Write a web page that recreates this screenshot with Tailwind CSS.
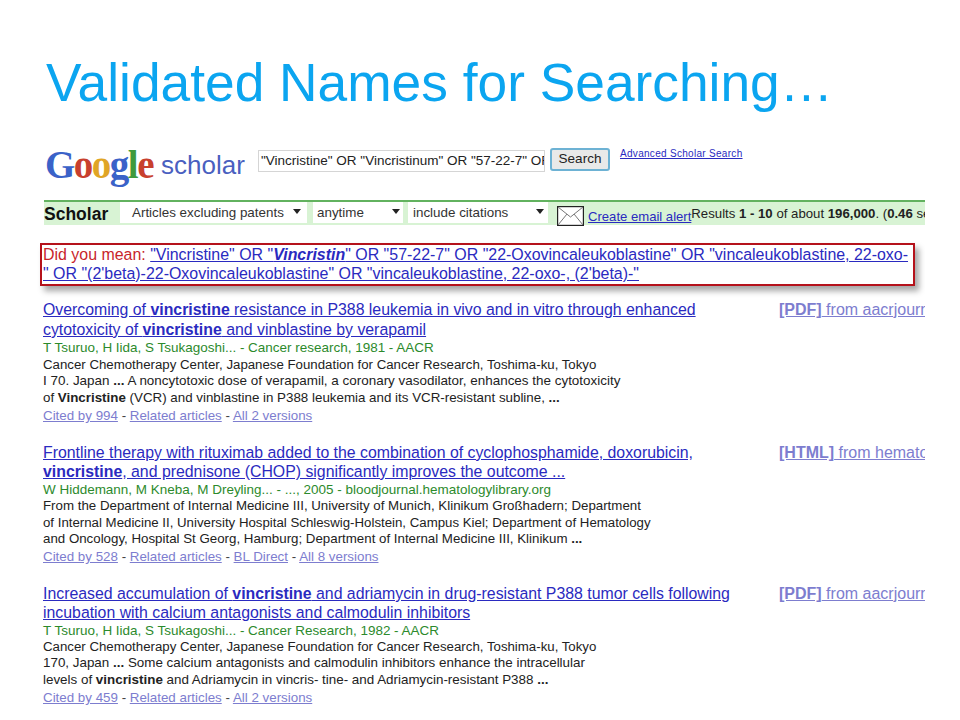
<!DOCTYPE html>
<html lang="en">
<head>
  <meta charset="UTF-8" />
  <title>Validated Names for Searching</title>
  <script src="https://cdn.jsdelivr.net/npm/@tailwindcss/browser@4"></script>
</head>
<body class="bg-white">
  <div class="w-[960px] h-[720px] overflow-hidden font-['Liberation_Sans',sans-serif]">
    <h1 class="pl-[46px] pt-[53px] h-[139px] text-[53.3px] leading-[60px] text-[#0ba5f0] whitespace-nowrap">Validated Names for Searching…</h1>

    <div class="w-[925px] overflow-hidden">
      <!-- search header -->
      <div class="flex h-[61px] pl-[45px]">
        <div class="flex items-start w-[212px] shrink-0 h-[44px]">
          <span class="mt-[6px] font-['Liberation_Serif',serif] font-bold text-[39px] leading-[40px] tracking-[-1.5px]"><span class="text-[#3a62c8]">G</span><span class="text-[#c8402e]">o</span><span class="text-[#e0a526]">o</span><span class="text-[#3a62c8]">g</span><span class="text-[#3f9a3c]">l</span><span class="text-[#c8402e]">e</span></span>
          <span class="ml-[8px] mt-[6px] text-[26px] leading-[40px] text-[#4a5fc0]">scholar</span>
        </div>
        <div class="shrink-0 ml-px mt-[11px] w-[287px] h-[22px] border border-[#d5d5d5] overflow-hidden whitespace-nowrap text-[13.5px] leading-[20px] pl-[2px] text-[#222]">"Vincristine" OR "Vincristinum" OR "57-22-7" OR "22-Oxovincaleukoblastine"</div>
        <div class="shrink-0 ml-[5px] mt-[9px] w-[60px] h-[23px] border-2 border-[#6db2d4] rounded-[3px] bg-[#e9e9e9] text-center text-[13.5px] leading-[18px] text-[#222]">Search</div>
        <a class="ml-[10px] mt-[9px] text-[10px] leading-[12px] text-[#2a2ac0] underline tracking-[0.3px] whitespace-nowrap">Advanced Scholar Search</a>
      </div>

      <!-- green bar -->
      <div class="ml-[44px] h-[25px] flex items-stretch bg-[#d8f3d4] border-t-2 border-[#62b25f] whitespace-nowrap">
        <div class="shrink-0 w-[76px] font-bold text-[17.5px] leading-[25px] text-[#111]">Scholar</div>
        <div class="shrink-0 w-[187px] h-[21px] bg-white flex justify-between pl-[12px] pr-[6px] text-[13.4px] leading-[22px] text-[#333]">Articles excluding patents<svg class="mt-[7px]" width="8" height="5" viewBox="0 0 8 5"><path d="M0 0h8L4 5z" fill="#222"/></svg></div>
        <div class="shrink-0 ml-[6px] w-[90px] h-[21px] bg-white flex justify-between pl-[4px] pr-[3px] text-[13.4px] leading-[22px] text-[#333]">anytime<svg class="mt-[7px]" width="8" height="5" viewBox="0 0 8 5"><path d="M0 0h8L4 5z" fill="#222"/></svg></div>
        <div class="shrink-0 ml-[5px] w-[140px] h-[21px] bg-white flex justify-between pl-[5px] pr-[4px] text-[13.4px] leading-[22px] text-[#333]">include citations<svg class="mt-[7px]" width="8" height="5" viewBox="0 0 8 5"><path d="M0 0h8L4 5z" fill="#222"/></svg></div>
        <svg class="shrink-0 ml-[9px] mt-[4px]" width="27" height="20" viewBox="0 0 27 20" fill="none"><rect x=".6" y=".6" width="25.8" height="18.8" fill="#fff" stroke="#222" stroke-width="1.2"/><path d="M1 1l12.5 10L26 1M1 19l9-11M26 19l-9-11" stroke="#777" stroke-width="1"/></svg>
        <a class="shrink-0 ml-[4px] text-[13.1px] leading-[29px] text-[#2a2ac0] underline">Create email alert</a>
        <div class="shrink-0 text-[13.2px] leading-[23px] text-[#222]">Results <b>1 - 10</b> of about <b>196,000</b>. (<b>0.46</b> seconds)</div>
      </div>

      <!-- did you mean box -->
      <div class="ml-[40px] mt-[18px] w-[875px] h-[43px] border-2 border-[#b5121b] shadow-[4px_5px_6px_rgba(0,0,0,0.35)] pl-[1px] text-[15.95px] leading-[19px] whitespace-nowrap overflow-hidden">
        <div><span class="text-[#c8252b]">Did you mean:</span> <a class="text-[#2a2ac0] underline">"Vincristine" OR "<b><i>Vincristin</i></b>" OR "57-22-7" OR "22-Oxovincaleukoblastine" OR "vincaleukoblastine, 22-oxo-</a></div>
        <div><a class="text-[#2a2ac0] underline">" OR "(2'beta)-22-Oxovincaleukoblastine" OR "vincaleukoblastine, 22-oxo-, (2'beta)-"</a></div>
      </div>

      <!-- results -->
      <div class="ml-[43px] mt-[14px] flex flex-col gap-[17px] whitespace-nowrap">
        <div class="flex">
          <div class="w-[736px] shrink-0">
            <div class="text-[15.85px] leading-[20px] text-[#2a2ac0] underline">Overcoming of <b>vincristine</b> resistance in P388 leukemia in vivo and in vitro through enhanced</div>
            <div class="text-[15.85px] leading-[19px] text-[#2a2ac0] underline">cytotoxicity of <b>vincristine</b> and vinblastine by verapamil</div>
            <div class="text-[13.47px] leading-[17px] text-[#2c8a2c]">T Tsuruo, H Iida, S Tsukagoshi... - Cancer research, 1981 - AACR</div>
            <div class="text-[13.25px] leading-[17px] text-[#222]">Cancer Chemotherapy Center, Japanese Foundation for Cancer Research, Toshima-ku, Tokyo</div>
            <div class="text-[13.45px] leading-[16px] text-[#222]">I 70. Japan <b>...</b> A noncytotoxic dose of verapamil, a coronary vasodilator, enhances the cytotoxicity</div>
            <div class="text-[13.35px] leading-[17px] text-[#222]">of <b>Vincristine</b> (VCR) and vinblastine in P388 leukemia and its VCR-resistant subline, <b>...</b></div>
            <div class="text-[13.35px] leading-[20px] text-[#444]"><a class="text-[#7d7dcf] underline">Cited by 994</a> - <a class="text-[#7d7dcf] underline">Related articles</a> - <a class="text-[#7d7dcf] underline">All 2 versions</a></div>
          </div>
          <div class="text-[16px] leading-[20px] text-[#7d7dcf] underline"><b>[PDF]</b> from aacrjournals.org</div>
        </div>

        <div class="flex">
          <div class="w-[736px] shrink-0">
            <div class="text-[15.85px] leading-[19px] text-[#2a2ac0] underline">Frontline therapy with rituximab added to the combination of cyclophosphamide, doxorubicin,</div>
            <div class="text-[15.85px] leading-[19px] text-[#2a2ac0] underline"><b>vincristine</b>, and prednisone (CHOP) significantly improves the outcome ...</div>
            <div class="text-[13.47px] leading-[17px] text-[#2c8a2c]">W Hiddemann, M Kneba, M Dreyling... - ..., 2005 - bloodjournal.hematologylibrary.org</div>
            <div class="text-[13.3px] leading-[16px] text-[#222]">From the Department of Internal Medicine III, University of Munich, Klinikum Großhadern; Department</div>
            <div class="text-[13.25px] leading-[17px] text-[#222]">of Internal Medicine II, University Hospital Schleswig-Holstein, Campus Kiel; Department of Hematology</div>
            <div class="text-[13.3px] leading-[16px] text-[#222]">and Oncology, Hospital St Georg, Hamburg; Department of Internal Medicine III, Klinikum <b>...</b></div>
            <div class="text-[13.35px] leading-[20px] text-[#444]"><a class="text-[#7d7dcf] underline">Cited by 528</a> - <a class="text-[#7d7dcf] underline">Related articles</a> - <a class="text-[#7d7dcf] underline">BL Direct</a> - <a class="text-[#7d7dcf] underline">All 8 versions</a></div>
          </div>
          <div class="text-[16px] leading-[20px] text-[#7d7dcf] underline"><b>[HTML]</b> from hematologylibrary.org</div>
        </div>

        <div class="flex">
          <div class="w-[736px] shrink-0">
            <div class="text-[15.85px] leading-[19px] text-[#2a2ac0] underline">Increased accumulation of <b>vincristine</b> and adriamycin in drug-resistant P388 tumor cells following</div>
            <div class="text-[15.85px] leading-[19px] text-[#2a2ac0] underline">incubation with calcium antagonists and calmodulin inhibitors</div>
            <div class="text-[13.47px] leading-[17px] text-[#2c8a2c]">T Tsuruo, H Iida, S Tsukagoshi... - Cancer Research, 1982 - AACR</div>
            <div class="text-[13.25px] leading-[16px] text-[#222]">Cancer Chemotherapy Center, Japanese Foundation for Cancer Research, Toshima-ku, Tokyo</div>
            <div class="text-[13.4px] leading-[16px] text-[#222]">170, Japan <b>...</b> Some calcium antagonists and calmodulin inhibitors enhance the intracellular</div>
            <div class="text-[13.4px] leading-[17px] text-[#222]">levels of <b>vincristine</b> and Adriamycin in vincris- tine- and Adriamycin-resistant P388 <b>...</b></div>
            <div class="text-[13.35px] leading-[19px] text-[#444]"><a class="text-[#7d7dcf] underline">Cited by 459</a> - <a class="text-[#7d7dcf] underline">Related articles</a> - <a class="text-[#7d7dcf] underline">All 2 versions</a></div>
          </div>
          <div class="text-[16px] leading-[20px] text-[#7d7dcf] underline"><b>[PDF]</b> from aacrjournals.org</div>
        </div>
      </div>
    </div>
  </div>
</body>
</html>
